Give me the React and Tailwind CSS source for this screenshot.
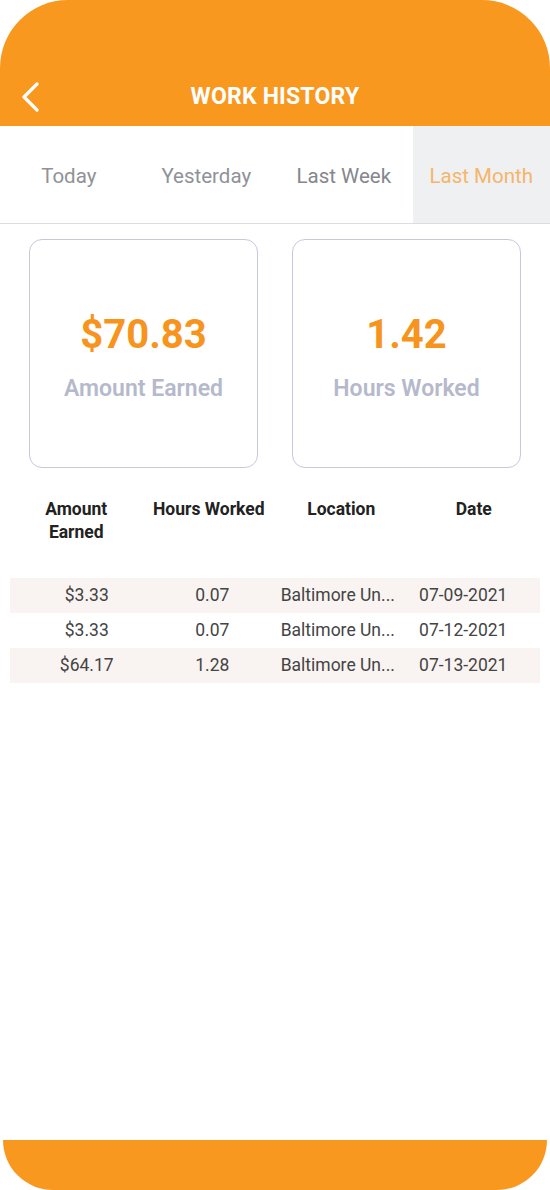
import React from "react";

const rows = [
  { amt: "$3.33", hrs: "0.07", loc: "Baltimore Un...", date: "07-09-2021", shade: true },
  { amt: "$3.33", hrs: "0.07", loc: "Baltimore Un...", date: "07-12-2021", shade: false },
  { amt: "$64.17", hrs: "1.28", loc: "Baltimore Un...", date: "07-13-2021", shade: true },
];

export default function App() {
  return (
    <div className="w-[550px] h-[1190px] bg-white flex flex-col overflow-hidden" style={{ fontFamily: "Roboto, 'Liberation Sans', sans-serif" }}>
      <div className="h-[126px] bg-[#f9981f] rounded-t-[68px] flex items-end pb-[16px] relative shrink-0">
        <div className="w-full h-[28px] flex items-center justify-center relative">
          <svg className="absolute left-[20px] top-0" width="22" height="30" viewBox="0 0 22 30" fill="none">
            <polyline points="17,2 4,15 17,28" stroke="#fff" strokeWidth="3.2" strokeLinecap="round" strokeLinejoin="round" />
          </svg>
          <span className="text-white font-bold text-[23px] tracking-[0.2px] mt-[2px]">WORK HISTORY</span>
        </div>
      </div>

      <div className="grid grid-cols-4 h-[98px] border-b border-[#dcdde2] shrink-0">
        <div className="flex items-center justify-center pt-[4px] text-[20.5px] text-[#909297]">Today</div>
        <div className="flex items-center justify-center pt-[4px] text-[20.5px] text-[#909297]">Yesterday</div>
        <div className="flex items-center justify-center pt-[4px] text-[20.5px] text-[#85878d]">Last Week</div>
        <div className="flex items-center justify-center pt-[4px] text-[20.5px] text-[#f5b56a] bg-[#eff0f2]">Last Month</div>
      </div>

      <div className="flex justify-between px-[29px] mt-[15px]">
        <div className="w-[229px] h-[229px] border-[1.5px] border-[#c6c9dc] rounded-[13px] flex flex-col items-center justify-center gap-[22px] pt-[8px]">
          <div className="text-[#f7941d] font-bold text-[40px] leading-none">$70.83</div>
          <div className="text-[#b6b9cb] font-semibold text-[23px] leading-none">Amount Earned</div>
        </div>
        <div className="w-[229px] h-[229px] border-[1.5px] border-[#c6c9dc] rounded-[13px] flex flex-col items-center justify-center gap-[22px] pt-[8px]">
          <div className="text-[#f7941d] font-bold text-[40px] leading-none">1.42</div>
          <div className="text-[#b6b9cb] font-semibold text-[23px] leading-none">Hours Worked</div>
        </div>
      </div>

      <div className="mx-[10px] mt-[30px]">
        <div className="grid grid-cols-4 text-[17.5px] font-bold text-[#222] leading-[23px] h-[80px] text-center">
          <div>Amount<br />Earned</div>
          <div>Hours Worked</div>
          <div>Location</div>
          <div>Date</div>
        </div>
        {rows.map((r, i) => (
          <div key={i} className={`grid grid-cols-4 px-[14px] h-[35px] items-center text-[17.5px] text-[#444] text-center ${r.shade ? "bg-[#f9f4f1]" : "bg-white"}`}>
            <div>{r.amt}</div>
            <div>{r.hrs}</div>
            <div className="whitespace-nowrap">{r.loc}</div>
            <div>{r.date}</div>
          </div>
        ))}
      </div>

      <div className="flex-1" />
      <div className="h-[50px] mx-[3px] bg-[#f9981f] rounded-b-[62px] shrink-0" />
    </div>
  );
}
